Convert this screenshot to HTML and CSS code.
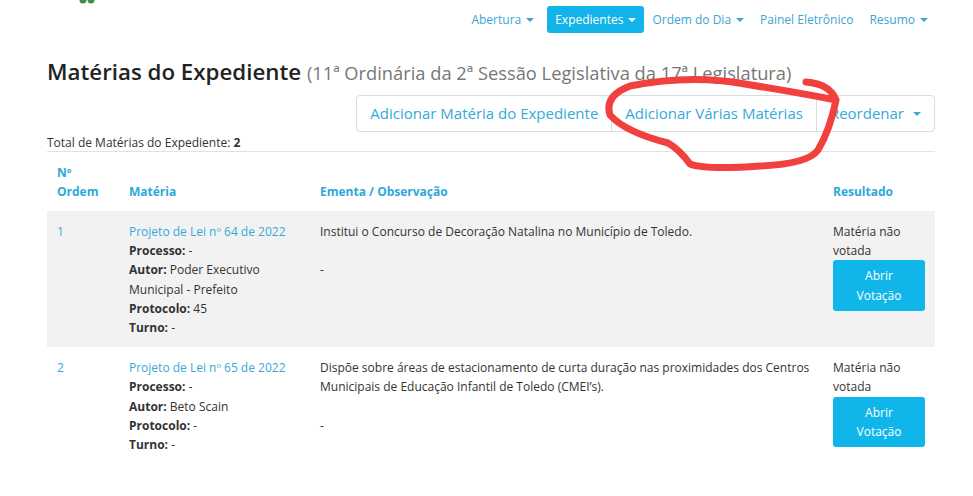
FILE: index.html
```html
<!DOCTYPE html>
<html lang="pt-BR">
<head>
    <meta charset="UTF-8">
    <meta name="viewport" content="width=device-width, initial-scale=1.0">
    <title>Matérias do Expediente</title>
    <link rel="stylesheet" href="styles.css">
</head>
<body>
    <header class="navbar">
        <div class="brand">
            <svg width="18" height="6" viewBox="0 0 18 6"><circle cx="5" cy="0" r="3.5" fill="#3f8f4a"/><circle cx="13" cy="0" r="3.5" fill="#3f8f4a"/></svg>
        </div>
        <nav class="menu">
            <a href="#" class="menu-item">Abertura <span class="caret"></span></a>
            <a href="#" class="menu-item active">Expedientes <span class="caret"></span></a>
            <a href="#" class="menu-item">Ordem do Dia <span class="caret"></span></a>
            <a href="#" class="menu-item">Painel Eletrônico</a>
            <a href="#" class="menu-item">Resumo <span class="caret"></span></a>
        </nav>
    </header>

    <main class="container">
        <h1 class="title">Matérias do Expediente <small>(11ª Ordinária da 2ª Sessão Legislativa da 17ª Legislatura)</small></h1>

        <div class="toolbar">
            <div class="btn-group">
                <a href="#" class="btn">Adicionar Matéria do Expediente</a>
                <a href="#" class="btn">Adicionar Várias Matérias</a>
                <a href="#" class="btn">Reordenar <span class="caret"></span></a>
            </div>
        </div>

        <div class="total">Total de Matérias do Expediente: <b>2</b></div>

        <table class="materias">
            <thead>
                <tr>
                    <th class="col-ordem">Nº<br>Ordem</th>
                    <th class="col-materia">Matéria</th>
                    <th>Ementa / Observação</th>
                    <th class="col-resultado">Resultado</th>
                </tr>
            </thead>
            <tbody>
                <tr class="striped">
                    <td><a href="#">1</a></td>
                    <td>
                        <a href="#">Projeto de Lei nº 64 de 2022</a><br>
                        <b>Processo:</b> -<br>
                        <b>Autor:</b> Poder Executivo Municipal - Prefeito<br>
                        <b>Protocolo:</b> 45<br>
                        <b>Turno:</b> -
                    </td>
                    <td>
                        <div>Institui o Concurso de Decoração Natalina no Município de Toledo.</div>
                        <div class="obs">-</div>
                    </td>
                    <td>
                        Matéria não votada
                        <a href="#" class="btn-votar">Abrir Votação</a>
                    </td>
                </tr>
                <tr>
                    <td><a href="#">2</a></td>
                    <td>
                        <a href="#">Projeto de Lei nº 65 de 2022</a><br>
                        <b>Processo:</b> -<br>
                        <b>Autor:</b> Beto Scain<br>
                        <b>Protocolo:</b> -<br>
                        <b>Turno:</b> -
                    </td>
                    <td>
                        <div>Dispõe sobre áreas de estacionamento de curta duração nas proximidades dos Centros Municipais de Educação Infantil de Toledo (CMEI’s).</div>
                        <div class="obs">-</div>
                    </td>
                    <td>
                        Matéria não votada
                        <a href="#" class="btn-votar">Abrir Votação</a>
                    </td>
                </tr>
            </tbody>
        </table>
    </main>

    <!-- hand-drawn mark over the screenshot -->
    <svg class="scribble" width="973" height="496" viewBox="0 0 973 496">
        <path d="M 806 82 Q 830 84 836 100 Q 830 130 818 150 Q 808 164 760 166 Q 705 170 690 164 Q 680 150 668 143 Q 625 132 610 115 Q 604 96 630 86 Q 690 74 745 84 Q 800 93 836 100" fill="none" stroke="#f0413f" stroke-width="7" stroke-linecap="round" stroke-linejoin="round"/>
    </svg>
</body>
</html>
```

FILE: styles.css
```css
body {
    font-family: 'Open Sans', 'Noto Sans', sans-serif;
    font-size: 12px;
    line-height: 19.2px;
    color: #333;
    background-color: #fff;
    margin: 0;
    padding: 0;
}

a {
    color: #35aad9;
    text-decoration: none;
}

.navbar {
    display: flex;
    justify-content: space-between;
    align-items: flex-start;
    height: 40px;
}

.brand {
    margin-left: 78px;
    line-height: 0;
}

.menu {
    display: flex;
    margin-top: 6px;
    margin-right: 37px;
}

.menu-item {
    display: flex;
    align-items: center;
    gap: 4px;
    height: 27px;
    padding: 0 8px;
    border-radius: 3px;
    color: #3ba4d3;
}

.menu-item.active {
    background-color: #12b4e9;
    color: #fff;
    margin-left: 5px;
}

.caret {
    display: inline-block;
    width: 0;
    height: 0;
    border-top: 4px solid;
    border-left: 4px solid transparent;
    border-right: 4px solid transparent;
    margin-left: 1px;
}

.container {
    padding: 0 38px 0 47px;
}

.title {
    font-size: 22.3px;
    font-weight: 600;
    line-height: 30px;
    margin: 17px 0 0;
    color: #222;
}

.title small {
    font-size: 18.3px;
    font-weight: 400;
    color: #777;
}

.toolbar {
    display: flex;
    justify-content: flex-end;
    margin-top: 7px;
}

.btn-group {
    display: flex;
    border: 1px solid #ddd;
    border-radius: 4px;
}

.btn {
    display: flex;
    align-items: center;
    gap: 8px;
    height: 35px;
    padding: 0 13px;
    font-size: 15px;
    color: #35aad9;
    border-left: 1px solid #ddd;
}

.btn:first-child {
    border-left: none;
}

.total {
    font-size: 12px;
    margin-top: 3px;
    line-height: 16px;
}

.materias {
    width: 100%;
    border-collapse: collapse;
    border-top: 1px solid #e2e2e2;
}

.materias th {
    color: #2ea8db;
    font-weight: 700;
    text-align: left;
    vertical-align: bottom;
    line-height: 19px;
    padding: 11px 10px 10px;
}

.materias td {
    vertical-align: top;
    padding: 11px 10px 10px;
}

.col-ordem {
    width: 52px;
}

.col-materia {
    width: 171px;
}

.col-resultado {
    width: 92px;
}

.striped td {
    background-color: #f2f2f2;
}

.obs {
    margin-top: 19px;
}

.btn-votar {
    display: block;
    padding: 6px 12px;
    background-color: #10b6ea;
    color: #fff;
    text-align: center;
    border-radius: 3px;
}

.scribble {
    position: absolute;
    top: 0;
    left: 0;
    pointer-events: none;
}
```
